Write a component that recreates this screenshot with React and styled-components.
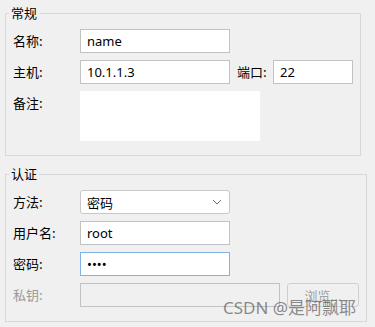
import React from "react";
import styled, { createGlobalStyle } from "styled-components";

const GlobalStyle = createGlobalStyle`
  body {
    margin: 0;
    background: #f0f0f0;
    font-family: "Noto Sans", "Noto Sans CJK SC", sans-serif;
    font-size: 13px;
    color: #000;
  }
`;

const Page = styled.div`
  position: relative;
  width: 375px;
  height: 327px;
  padding: 4px 0 0 5px;
  box-sizing: border-box;
  display: flex;
  flex-direction: column;
  gap: 9px;
`;

const Group = styled.fieldset`
  margin: 0;
  width: ${(p) => p.$width}px;
  box-sizing: border-box;
  border: 1px solid #d8d8d8;
  padding: 7px 7px 14px;
  display: flex;
  flex-direction: column;
  gap: 7px;
  min-width: 0;
`;

const Legend = styled.legend`
  margin-left: -4px;
  padding: 0 2px;
  line-height: 18px;
  font-family: "Noto Sans CJK SC", sans-serif;
`;

const Row = styled.div`
  display: flex;
  align-items: flex-start;
`;

const Label = styled.span`
  width: ${(p) => p.$width || 67}px;
  flex: none;
  line-height: 24px;
  height: 24px;
  color: ${(p) => (p.$disabled ? "#9a9a9a" : "#000")};
  font-family: "Noto Sans CJK SC", sans-serif;
  white-space: nowrap;
`;

const Input = styled.input`
  width: ${(p) => p.$width || 150}px;
  height: 24px;
  box-sizing: border-box;
  margin: 0;
  padding: 0 6px;
  border: 1px solid ${(p) => (p.$focus ? "#80b3e4" : "#c2c2c2")};
  background: ${(p) => (p.disabled ? "#f0f0f0" : "#fff")};
  font-family: "Noto Sans", "Noto Sans CJK SC", sans-serif;
  font-size: 13px;
  color: #000;
  outline: none;
  flex: none;
`;

const Notes = styled.textarea`
  width: 180px;
  height: 50px;
  box-sizing: border-box;
  margin: 0;
  border: none;
  background: #fff;
  resize: none;
  outline: none;
  flex: none;
`;

const PortLabel = styled(Label)`
  margin-left: 7px;
`;

const Combo = styled.div`
  width: 150px;
  height: 24px;
  box-sizing: border-box;
  border: 1px solid #c8c8c8;
  border-radius: 3px;
  background: #fff;
  display: flex;
  align-items: center;
  justify-content: space-between;
  padding: 0 7px 0 6px;
  font-family: "Noto Sans CJK SC", sans-serif;
  flex: none;
`;

const Button = styled.button`
  margin-left: 7px;
  width: 72px;
  height: 24px;
  box-sizing: border-box;
  border: 1px solid #cfcfcf;
  border-radius: 3px;
  background: #f0f0f0;
  color: #a0a0a0;
  font-family: "Noto Sans CJK SC", sans-serif;
  font-size: 13px;
  padding: 0;
  flex: none;
`;

const Watermark = styled.div`
  position: absolute;
  left: 223px;
  top: 298px;
  font-family: "Noto Sans", "Noto Sans CJK SC", sans-serif;
  font-size: 17px;
  line-height: 20px;
  color: rgba(90, 90, 90, 0.7);
  white-space: nowrap;
`;

function Chevron() {
  return (
    <svg width="10" height="6" viewBox="0 0 10 6">
      <path d="M1 1l4 4 4-4" fill="none" stroke="#707070" strokeWidth="1" />
    </svg>
  );
}

export default function App() {
  return (
    <>
      <GlobalStyle />
      <Page>
        <Group $width={356}>
          <Legend>常规</Legend>
          <Row>
            <Label>名称:</Label>
            <Input defaultValue="name" />
          </Row>
          <Row>
            <Label>主机:</Label>
            <Input defaultValue="10.1.1.3" />
            <PortLabel $width={36}>端口:</PortLabel>
            <Input $width={80} defaultValue="22" />
          </Row>
          <Row>
            <Label>备注:</Label>
            <Notes />
          </Row>
        </Group>
        <Group $width={362}>
          <Legend>认证</Legend>
          <Row>
            <Label>方法:</Label>
            <Combo>
              <span>密码</span>
              <Chevron />
            </Combo>
          </Row>
          <Row>
            <Label>用户名:</Label>
            <Input defaultValue="root" />
          </Row>
          <Row>
            <Label>密码:</Label>
            <Input $focus type="password" defaultValue="1234" />
          </Row>
          <Row>
            <Label $disabled>私钥:</Label>
            <Input $width={200} disabled />
            <Button disabled>浏览...</Button>
          </Row>
        </Group>
        <Watermark>CSDN @是阿飘耶</Watermark>
      </Page>
    </>
  );
}
